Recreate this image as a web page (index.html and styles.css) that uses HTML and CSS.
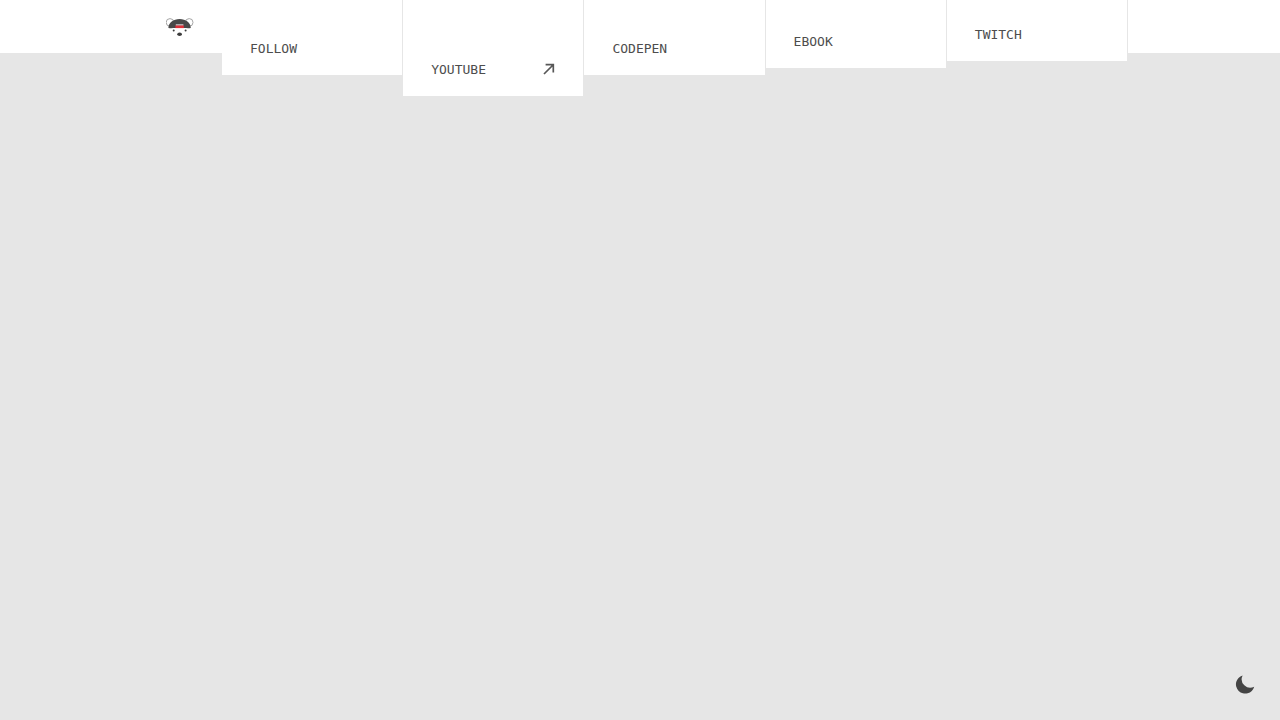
FILE: index.html
```html
<!DOCTYPE html>
<html lang="en">

<head>
    <title>Bear Nav</title>
    <meta charset="UTF-8">
    <meta name="viewport" content="width=device-width, initial-scale=1.0">
    <link rel="stylesheet" href="styles.css">
</head>

<body>

    <!-- NAVIGATION -->
    <header class="site-header">
        <nav class="nav">
            <a class="logo" href="#" aria-label="Home">
                <svg viewBox="0 0 28 20" width="28" height="20">
                    <g fill="#fff" stroke="#a6a6a6" stroke-width="1">
                        <circle cx="4" cy="5.4" r="3.8" />
                        <circle cx="23.2" cy="5.4" r="3.8" />
                    </g>
                    <path fill="#fff" d="M2.6 10.8 Q13.6-6 24.6 10.8 L21 18 H6Z" />
                    <path fill="#484848" d="M2.4 11 C2.6 5.6 7.4 2 13.6 2 S24.6 5.6 24.8 11 Q22.5 11.3 20 11.1 H7.2 Q4.8 11.3 2.4 11Z" />
                    <path fill="#f2f2f2" d="M9.8 7.4 H17.4 V8.6 H9.8Z" />
                    <path fill="#df3039" d="M9.4 8.5 H17.8 V11.1 H9.4Z" />
                    <g fill="#3c3c3c">
                        <circle cx="7.7" cy="13.5" r="1" />
                        <circle cx="19.6" cy="13.5" r="1" />
                        <ellipse cx="13.6" cy="17.3" rx="2.4" ry="1.8" />
                    </g>
                </svg>
            </a>
            <ul class="nav-list">
                <li class="nav-item drop-3"><a href="#">FOLLOW</a></li>
                <li class="nav-item drop-4">
                    <a href="#">YOUTUBE
                        <svg class="arrow" viewBox="0 0 12 12" width="12" height="12" aria-hidden="true">
                            <path d="M1 11 L10 2 M2.6 1.7 H10.3 V9.4" fill="none" stroke="#575757" stroke-width="1.7" />
                        </svg>
                    </a>
                </li>
                <li class="nav-item drop-3"><a href="#">CODEPEN</a></li>
                <li class="nav-item drop-2"><a href="#">EBOOK</a></li>
                <li class="nav-item drop-1"><a href="#">TWITCH</a></li>
            </ul>
        </nav>
    </header>

    <!-- THEME BUTTON -->
    <button class="theme-toggle" type="button" aria-label="Dark theme">
        <svg viewBox="0 0 20 20" width="20" height="20">
            <path fill="#444" d="M7.6 0.4 A9.3 9.3 0 1 0 19.2 11.8 A8.6 8.6 0 0 1 7.6 0.4Z" />
        </svg>
    </button>

</body>

</html>
```
FILE: styles.css
```css
* {
    box-sizing: border-box;
    margin: 0;
    padding: 0;
}
body {
    min-height: 100vh;
    background-color: #e6e6e6;
    color: #4d4d4d;
    font-family: "DejaVu Sans Mono", monospace;
    font-size: 13px;
}
.site-header {
    height: 53px;
    background-color: #fff;
}
.nav {
    display: flex;
    align-items: flex-start;
    max-width: 976px;
    margin: 0 auto;
}
.logo {
    display: flex;
    align-items: center;
    height: 54px;
    padding: 0 28px 0 14px;
}
.nav-list {
    display: flex;
    flex: 1;
    align-items: flex-start;
    list-style: none;
}
.nav-item {
    flex: 1;
    background-color: #fff;
    border-right: 1px solid #e6e6e6;
}
.nav-item a {
    display: flex;
    align-items: center;
    justify-content: space-between;
    height: 54px;
    padding: 0 28px;
    color: inherit;
    text-decoration: none;
}
/* how far each tab hangs below the bar */
.drop-1 {
    padding-top: 7px;
}
.drop-2 {
    padding-top: 14px;
}
.drop-3 {
    padding-top: 21px;
}
.drop-4 {
    padding-top: 42px;
}
.theme-toggle {
    position: fixed;
    right: 14px;
    bottom: 14px;
    display: grid;
    place-items: center;
    width: 42px;
    height: 42px;
    border: none;
    background: none;
    cursor: pointer;
}
```
